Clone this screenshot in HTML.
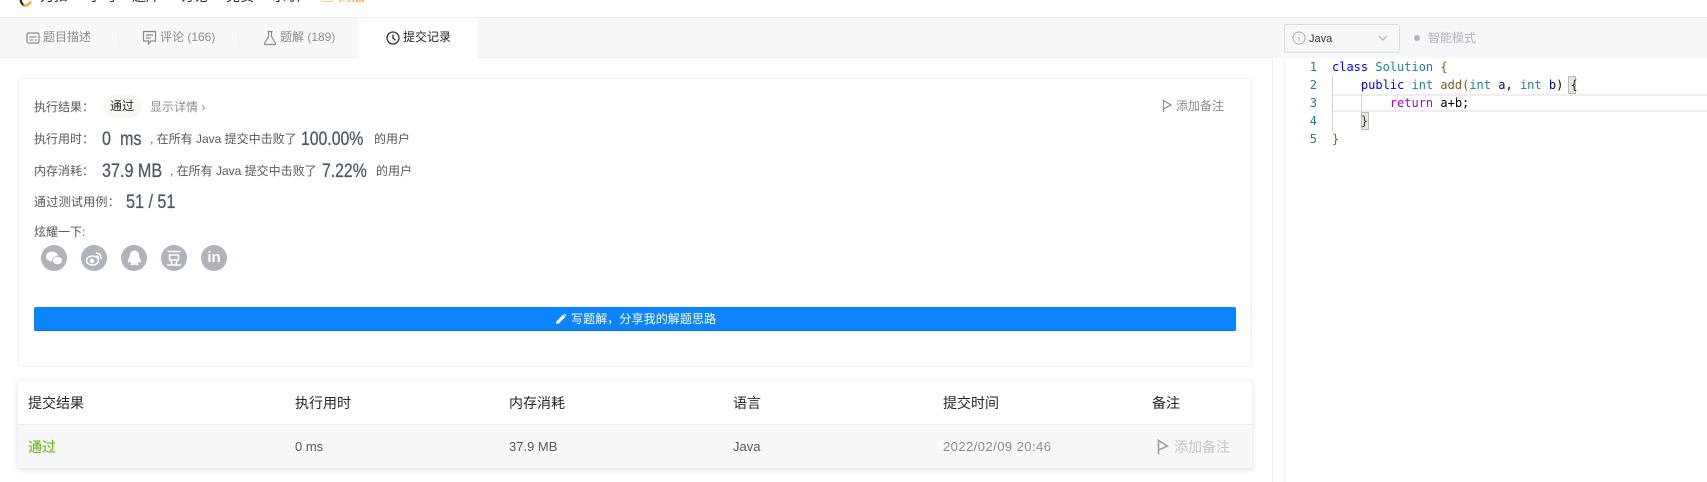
<!DOCTYPE html>
<html lang="zh-CN">
<head>
<meta charset="utf-8">
<title>提交记录</title>
<style>
html,body{margin:0;padding:0;background:#fff}
body{width:1707px;height:482px;position:relative;overflow:hidden;font-family:"Liberation Sans","Noto Sans CJK SC",sans-serif;font-size:12px;color:#262626}
.a{position:absolute;white-space:nowrap}
.nav{font-size:14px;top:-14px;line-height:20px;color:#262626}
.tab{top:17px;height:40px;line-height:40px;font-size:12px;color:#8c8c8c}
.l{font-size:12px;color:#595959;line-height:18px}
.n{font-size:19px;color:#455a64;line-height:24px;font-weight:500;transform-origin:0 50%;-webkit-text-stroke:.25px #455a64}
.ic{position:absolute;width:26px;height:26px;border-radius:50%;background:#b0b3ba;top:245px}
.th{top:393px;font-size:14px;line-height:20px;color:#262626}
.td{top:437px;font-size:13px;line-height:20px;color:#595959}
.ln{position:absolute;left:1285px;width:32px;text-align:right;font:12px/18px "DejaVu Sans Mono",monospace;color:#237893}
.cl{position:absolute;left:1332px;font:12px/18px "DejaVu Sans Mono",monospace;white-space:pre;color:#000}
.k{color:#00f}.t{color:#267f99}.f{color:#795e26}.r{color:#af00db}.v{color:#001080}
</style>
</head>
<body>
<!-- top nav -->
<div class="a" style="left:0;top:0;width:1707px;height:17px;background:#fff;border-bottom:1px solid #eceef1;box-sizing:content-box"></div>
<svg class="a" style="left:18px;top:0" width="16" height="8" viewBox="0 0 16 8" fill="none"><path d="M2.500 0 Q3.500 4 6 5.500" stroke="#262626" stroke-width="2.200"/><path d="M5 5.500 Q9 7 13 1.500" stroke="#f5a623" stroke-width="2.200"/></svg>
<div class="a nav" style="left:40px">力扣</div>
<div class="a nav" style="left:88px">学习</div>
<div class="a nav" style="left:132px">题库</div>
<div class="a nav" style="left:180px">讨论</div>
<div class="a nav" style="left:226px">竞赛</div>
<div class="a nav" style="left:272px">求职</div>
<div class="a nav" style="left:320px;color:#ffa116">▣ 商店</div>

<!-- tab bar -->
<div class="a" style="left:0;top:18px;width:1707px;height:40px;background:#f7f8fa"></div>
<div class="a" style="left:0;top:57px;width:1272px;height:1px;background:#eeeff2"></div>
<div class="a" style="left:358px;top:18px;width:119px;height:40px;background:#fff"></div>
<div class="a" style="left:118px;top:30px;width:1px;height:16px;background:#f0f1f3"></div>
<div class="a" style="left:238px;top:30px;width:1px;height:16px;background:#f0f1f3"></div>

<svg class="a" style="left:26px;top:31px" width="14" height="14" viewBox="0 0 14 14" fill="none" stroke="#8c8c8c" stroke-width="1.200"><rect x="1" y="2" width="12" height="10" rx="1.500"/><path d="M3.500 6h7M3.500 9h3.500M8.500 9h2"/></svg>
<div class="a tab" style="left:43px">题目描述</div>
<svg class="a" style="left:142px;top:30px" width="15" height="16" viewBox="0 0 15 16" fill="none" stroke="#8c8c8c" stroke-width="1.200"><path d="M1.500 1.500h12v9.500h-4.500l-2.500 3v-3h-5z"/><path d="M4 5h7M4 8h4.500"/></svg>
<div class="a tab" style="left:160px">评论 (166)</div>
<svg class="a" style="left:263px;top:30px" width="14" height="16" viewBox="0 0 14 16" fill="none" stroke="#8c8c8c" stroke-width="1.200"><path d="M4.500 1.500h5M5.500 1.500v5L1.500 13.500q-.3 1 .8 1h9.400q1.100 0 .8-1L8.500 6.500v-5"/></svg>
<div class="a tab" style="left:280px">题解 (189)</div>
<svg class="a" style="left:386px;top:31px" width="14" height="14" viewBox="0 0 14 14" fill="none" stroke="#333" stroke-width="1.300"><circle cx="7" cy="7" r="6"/><path d="M7 3.500V7.300L9.500 9"/></svg>
<div class="a tab" style="left:403px;color:#262626">提交记录</div>

<!-- editor toolbar -->
<div class="a" style="left:1284px;top:24px;width:114px;height:27px;border:1px solid #d9dbe0;border-radius:3px;box-sizing:content-box;background:#f7f8fa"></div>
<svg class="a" style="left:1292px;top:31px" width="14" height="14" viewBox="0 0 14 14" fill="none" stroke="#a8abb2"><circle cx="7" cy="7" r="6"/><path d="M7 6v4.500M7 3.500v1.200"/></svg>
<div class="a" style="left:1309px;top:30px;line-height:18px;font-size:11px;color:#333">Java</div>
<svg class="a" style="left:1378px;top:35px" width="10" height="7" viewBox="0 0 10 7" fill="none" stroke="#a8abb2" stroke-width="1.100"><path d="M1 1l4 4 4-4"/></svg>
<div class="a" style="left:1414px;top:35px;width:6px;height:6px;border-radius:50%;background:#b0b3ba"></div>
<div class="a" style="left:1428px;top:29px;line-height:18px;font-size:12px;color:#b0b3ba">智能模式</div>

<!-- editor -->
<div class="a" style="left:1272px;top:58px;width:1px;height:424px;background:#eeeff2"></div>
<div class="a" style="left:1284px;top:58px;width:1px;height:424px;background:#eeeff2"></div>
<div class="ln" style="top:58px">1</div>
<div class="ln" style="top:76px">2</div>
<div class="ln" style="top:94px">3</div>
<div class="ln" style="top:112px">4</div>
<div class="ln" style="top:130px">5</div>
<div class="a" style="left:1332px;top:94px;width:375px;height:18px;box-sizing:border-box;border-top:2px solid #eeeeee;border-bottom:2px solid #eeeeee"></div>
<div class="a" style="left:1332px;top:76px;width:1px;height:54px;background:#d3d3d3"></div>
<div class="a" style="left:1361px;top:94px;width:1px;height:18px;background:#d3d3d3"></div>
<div class="a" style="left:1568px;top:76px;width:8px;height:18px;background:#e8e8df;border:1px solid #b9b9b9;box-sizing:border-box"></div>
<div class="a" style="left:1361px;top:112px;width:8px;height:18px;background:#e8e8df;border:1px solid #b9b9b9;box-sizing:border-box"></div>
<div class="cl" style="top:58px"><span class="k">class</span> <span class="t">Solution</span> <span style="color:#795e26">{</span></div>
<div class="cl" style="top:76px">    <span class="k">public</span> <span class="t">int</span> <span class="f">add(</span><span class="t">int</span> <span class="v">a</span>, <span class="t">int</span> <span class="v">b</span>) <span style="color:#333">{</span></div>
<div class="cl" style="top:94px">        <span class="r">return</span> a+b;</div>
<div class="cl" style="top:112px">    <span style="color:#333">}</span></div>
<div class="cl" style="top:130px"><span style="color:#795e26">}</span></div>

<!-- result card -->
<div class="a" style="left:18px;top:78px;width:1234px;height:289px;box-sizing:border-box;border:1px solid #f0f0f0;border-radius:4px;background:#fff"></div>
<div class="a l" style="left:34px;top:98px">执行结果：</div>
<div class="a" style="left:103px;top:95px;width:39px;height:23px;border-radius:12px;background:#f6f9f1"></div>
<div class="a" style="left:110px;top:97px;line-height:18px;font-size:12px;color:#262626">通过</div>
<div class="a" style="left:150px;top:98px;line-height:18px;font-size:12px;color:#8c8c8c">显示详情 ›</div>
<svg class="a" style="left:1162px;top:99px" width="10" height="14" viewBox="0 0 10 14" fill="none" stroke="#8c8c8c" stroke-width="1.200"><path d="M1.500 13V1.500L9 6 1.500 10"/></svg>
<div class="a" style="left:1176px;top:97px;line-height:18px;font-size:12px;color:#8c8c8c">添加备注</div>

<div class="a l" style="left:34px;top:130px">执行用时：</div>
<div class="a n" style="left:102px;top:128px;transform:scaleX(.85)">0 &nbsp;ms</div>
<div class="a l" style="left:150px;top:130px">, 在所有 Java 提交中击败了</div>
<div class="a n" style="left:301px;top:128px;transform:scaleX(.83)">100.00%</div>
<div class="a l" style="left:374px;top:130px">的用户</div>

<div class="a l" style="left:34px;top:162px">内存消耗：</div>
<div class="a n" style="left:102px;top:160px;transform:scaleX(.85)">37.9 MB</div>
<div class="a l" style="left:170px;top:162px">, 在所有 Java 提交中击败了</div>
<div class="a n" style="left:322px;top:160px;transform:scaleX(.83)">7.22%</div>
<div class="a l" style="left:376px;top:162px">的用户</div>

<div class="a l" style="left:34px;top:193px;letter-spacing:.3px">通过测试用例：</div>
<div class="a n" style="left:126px;top:191px;transform:scaleX(.85)">51 / 51</div>

<div class="a l" style="left:34px;top:223px">炫耀一下:</div>
<div class="ic" style="left:41px"><svg width="26" height="26" viewBox="0 0 26 26" fill="#fff"><ellipse cx="11" cy="11.500" rx="6" ry="5"/><ellipse cx="16.500" cy="15.500" rx="5" ry="4.200" stroke="#b0b3ba" stroke-width=".8"/></svg></div>
<div class="ic" style="left:81px"><svg width="26" height="26" viewBox="0 0 26 26" fill="none" stroke="#fff" stroke-width="1.500"><ellipse cx="11.500" cy="15.500" rx="6" ry="4.500"/><circle cx="11" cy="16" r="1.500" fill="#fff"/><path d="M15 8a5 5 0 0 1 5 6M15.500 11a2 2 0 0 1 2 2.500"/></svg></div>
<div class="ic" style="left:121px"><svg width="26" height="26" viewBox="0 0 26 26" fill="#fff"><path d="M13 5.500c3.800 0 5.200 2.800 5.200 5.500 0 1.200 1.800 3.400 1.800 5.500 0 1.600-1.200 1.100-2 0-.3 1-.9 1.800-1.500 2.200 1 .4 1.600 1.100.5 1.400-1.400.3-3 0-3.500-.6-.5.600-2.100.9-3.500.6-1.100-.3-.5-1 .5-1.400-.6-.4-1.200-1.200-1.500-2.200-.8 1.100-2 1.600-2 0 0-2.100 1.800-4.300 1.800-5.500 0-2.700 1.400-5.500 5.200-5.500z"/></svg></div>
<div class="ic" style="left:161px"><svg width="26" height="26" viewBox="0 0 26 26" fill="none" stroke="#fff" stroke-width="1.500"><path d="M6.500 6.500h13M8.500 10h9v5h-9zM6 20h14M10 16l1.200 3.500M16 16l-1.200 3.500"/></svg></div>
<div class="ic" style="left:201px"><div style="position:absolute;left:0;top:0;width:26px;text-align:center;line-height:26px;font-size:15px;font-weight:bold;color:#fff">in</div></div>

<div class="a" style="left:34px;top:307px;width:1202px;height:24px;background:#0a84ff;border-radius:2px;border-bottom:1px solid #0a6fd1;box-sizing:border-box"></div>
<svg class="a" style="left:555px;top:313px" width="12" height="12" viewBox="0 0 12 12" fill="#fff"><path d="M1 11l.6-3L8 1.600 10.400 4 4 10.400zM8.800 1l.8-.5 1.900 1.900-.5.800z"/></svg>
<div class="a" style="left:571px;top:310px;line-height:18px;font-size:12px;color:#fff;letter-spacing:.1px">写题解，分享我的解题思路</div>

<!-- table -->
<div class="a" style="left:18px;top:381px;width:1234px;height:87px;background:#fff;box-shadow:0 1px 6px rgba(0,0,0,.14)"></div>
<div class="a" style="left:18px;top:424px;width:1234px;height:44px;background:#f7f8fa;border-top:1px solid #eeeff2;box-sizing:border-box"></div>
<div class="a th" style="left:28px">提交结果</div>
<div class="a th" style="left:295px">执行用时</div>
<div class="a th" style="left:509px">内存消耗</div>
<div class="a th" style="left:733px">语言</div>
<div class="a th" style="left:943px">提交时间</div>
<div class="a th" style="left:1152px">备注</div>
<div class="a td" style="left:28px;color:#5cb300;font-size:14px">通过</div>
<div class="a td" style="left:295px">0 ms</div>
<div class="a td" style="left:509px">37.9 MB</div>
<div class="a td" style="left:733px">Java</div>
<div class="a td" style="left:943px;color:#8c8c8c;letter-spacing:.45px">2022/02/09 20:46</div>
<svg class="a" style="left:1157px;top:439px" width="12" height="16" viewBox="0 0 12 16" fill="none" stroke="#9a9a9a" stroke-width="1.500"><path d="M1.500 15.500V1.500L10.500 7 1.500 11"/></svg>
<div class="a td" style="left:1174px;color:#c4c4c4;font-size:14px">添加备注</div>
</body>
</html>
